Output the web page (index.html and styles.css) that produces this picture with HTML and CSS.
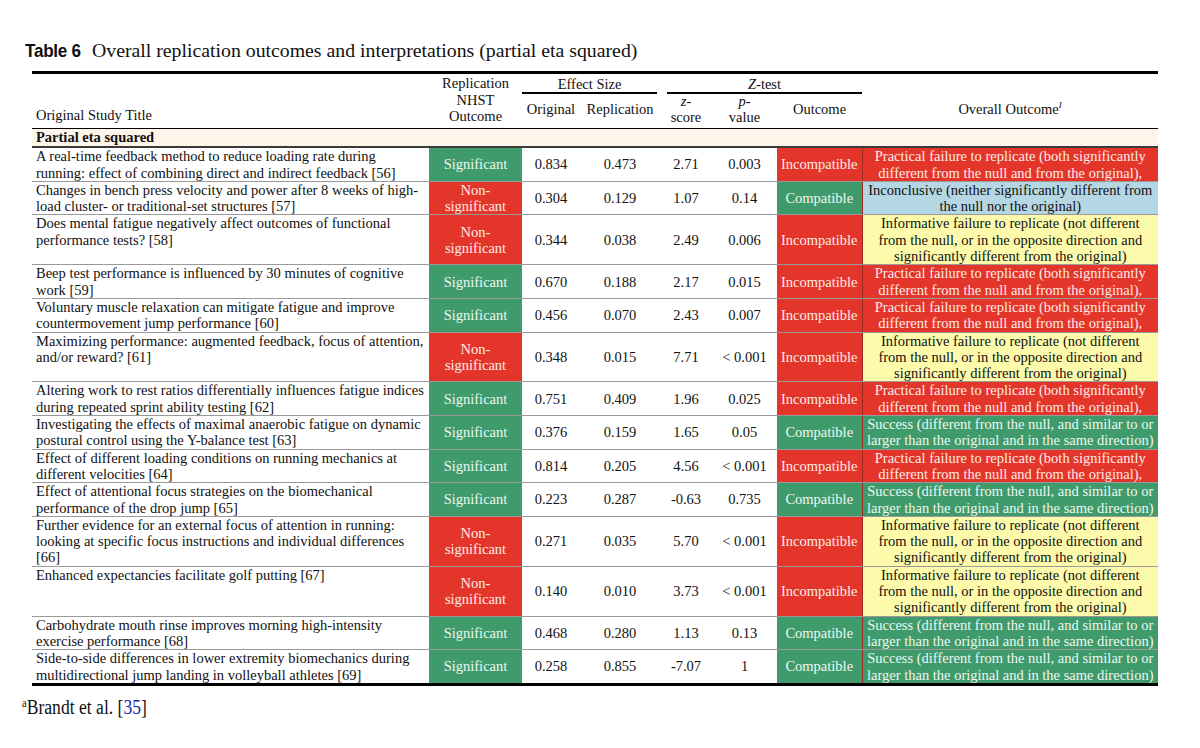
FILE: index.html
```html
<!DOCTYPE html>
<html>
<head>
<meta charset="utf-8">
<link rel="stylesheet" href="styles.css">
</head>
<body>
<div class="page">
  <div class="caption"><span class="cap-label">Table 6</span><span class="cap-text">Overall replication outcomes and interpretations (partial eta squared)</span></div>
  <table class="tbl">
    <colgroup>
      <col class="c-title"><col class="c-nhst"><col class="c-orig"><col class="c-rep"><col class="c-z"><col class="c-p"><col class="c-out"><col class="c-all">
    </colgroup>
    <thead>
      <tr class="h1">
        <th rowspan="2" class="h-title">Original Study Title</th>
        <th rowspan="2" class="h-nhst">Replication<br>NHST<br>Outcome</th>
        <th colspan="2" class="h-group"><div class="grp grp-es">Effect Size</div></th>
        <th colspan="3" class="h-group"><div class="grp grp-z"><i>Z</i>-test</div></th>
        <th></th>
      </tr>
      <tr class="h2">
        <th>Original</th>
        <th>Replication</th>
        <th><i>z</i>-<br>score</th>
        <th><i>p</i>-<br>value</th>
        <th>Outcome</th>
        <th>Overall Outcome<sup class="sup-i">I</sup></th>
      </tr>
    </thead>
    <tbody>
      <tr class="section"><td colspan="8">Partial eta squared</td></tr>
      <tr>
        <td class="t">A real-time feedback method to reduce loading rate during<br>running: effect of combining direct and indirect feedback [56]</td>
        <td class="sig">Significant</td><td>0.834</td><td>0.473</td><td>2.71</td><td>0.003</td>
        <td class="bad">Incompatible</td>
        <td class="ov bad">Practical failure to replicate (both significantly<br>different from the null and from the original),</td>
      </tr>
      <tr>
        <td class="t">Changes in bench press velocity and power after 8 weeks of high-<br>load cluster- or traditional-set structures [57]</td>
        <td class="bad">Non-<br>significant</td><td>0.304</td><td>0.129</td><td>1.07</td><td>0.14</td>
        <td class="sig">Compatible</td>
        <td class="ov blue">Inconclusive (neither significantly different from<br>the null nor the original)</td>
      </tr>
      <tr>
        <td class="t">Does mental fatigue negatively affect outcomes of functional<br>performance tests? [58]</td>
        <td class="bad">Non-<br>significant</td><td>0.344</td><td>0.038</td><td>2.49</td><td>0.006</td>
        <td class="bad">Incompatible</td>
        <td class="ov yel">Informative failure to replicate (not different<br>from the null, or in the opposite direction and<br>significantly different from the original)</td>
      </tr>
      <tr>
        <td class="t">Beep test performance is influenced by 30 minutes of cognitive<br>work [59]</td>
        <td class="sig">Significant</td><td>0.670</td><td>0.188</td><td>2.17</td><td>0.015</td>
        <td class="bad">Incompatible</td>
        <td class="ov bad">Practical failure to replicate (both significantly<br>different from the null and from the original),</td>
      </tr>
      <tr>
        <td class="t">Voluntary muscle relaxation can mitigate fatigue and improve<br>countermovement jump performance [60]</td>
        <td class="sig">Significant</td><td>0.456</td><td>0.070</td><td>2.43</td><td>0.007</td>
        <td class="bad">Incompatible</td>
        <td class="ov bad">Practical failure to replicate (both significantly<br>different from the null and from the original),</td>
      </tr>
      <tr>
        <td class="t">Maximizing performance: augmented feedback, focus of attention,<br>and/or reward? [61]</td>
        <td class="bad">Non-<br>significant</td><td>0.348</td><td>0.015</td><td>7.71</td><td>&lt; 0.001</td>
        <td class="bad">Incompatible</td>
        <td class="ov yel">Informative failure to replicate (not different<br>from the null, or in the opposite direction and<br>significantly different from the original)</td>
      </tr>
      <tr>
        <td class="t">Altering work to rest ratios differentially influences fatigue indices<br>during repeated sprint ability testing [62]</td>
        <td class="sig">Significant</td><td>0.751</td><td>0.409</td><td>1.96</td><td>0.025</td>
        <td class="bad">Incompatible</td>
        <td class="ov bad">Practical failure to replicate (both significantly<br>different from the null and from the original),</td>
      </tr>
      <tr>
        <td class="t">Investigating the effects of maximal anaerobic fatigue on dynamic<br>postural control using the Y-balance test [63]</td>
        <td class="sig">Significant</td><td>0.376</td><td>0.159</td><td>1.65</td><td>0.05</td>
        <td class="sig">Compatible</td>
        <td class="ov sig">Success (different from the null, and similar to or<br>larger than the original and in the same direction)</td>
      </tr>
      <tr>
        <td class="t">Effect of different loading conditions on running mechanics at<br>different velocities [64]</td>
        <td class="sig">Significant</td><td>0.814</td><td>0.205</td><td>4.56</td><td>&lt; 0.001</td>
        <td class="bad">Incompatible</td>
        <td class="ov bad">Practical failure to replicate (both significantly<br>different from the null and from the original),</td>
      </tr>
      <tr>
        <td class="t">Effect of attentional focus strategies on the biomechanical<br>performance of the drop jump [65]</td>
        <td class="sig">Significant</td><td>0.223</td><td>0.287</td><td>-0.63</td><td>0.735</td>
        <td class="sig">Compatible</td>
        <td class="ov sig">Success (different from the null, and similar to or<br>larger than the original and in the same direction)</td>
      </tr>
      <tr>
        <td class="t">Further evidence for an external focus of attention in running:<br>looking at specific focus instructions and individual differences<br>[66]</td>
        <td class="bad">Non-<br>significant</td><td>0.271</td><td>0.035</td><td>5.70</td><td>&lt; 0.001</td>
        <td class="bad">Incompatible</td>
        <td class="ov yel">Informative failure to replicate (not different<br>from the null, or in the opposite direction and<br>significantly different from the original)</td>
      </tr>
      <tr>
        <td class="t">Enhanced expectancies facilitate golf putting [67]</td>
        <td class="bad">Non-<br>significant</td><td>0.140</td><td>0.010</td><td>3.73</td><td>&lt; 0.001</td>
        <td class="bad">Incompatible</td>
        <td class="ov yel">Informative failure to replicate (not different<br>from the null, or in the opposite direction and<br>significantly different from the original)</td>
      </tr>
      <tr>
        <td class="t">Carbohydrate mouth rinse improves morning high-intensity<br>exercise performance [68]</td>
        <td class="sig">Significant</td><td>0.468</td><td>0.280</td><td>1.13</td><td>0.13</td>
        <td class="sig">Compatible</td>
        <td class="ov sig">Success (different from the null, and similar to or<br>larger than the original and in the same direction)</td>
      </tr>
      <tr class="last">
        <td class="t">Side-to-side differences in lower extremity biomechanics during<br>multidirectional jump landing in volleyball athletes [69]</td>
        <td class="sig">Significant</td><td>0.258</td><td>0.855</td><td>-7.07</td><td>1</td>
        <td class="sig">Compatible</td>
        <td class="ov sig">Success (different from the null, and similar to or<br>larger than the original and in the same direction)</td>
      </tr>
    </tbody>
  </table>
  <div class="foot"><span class="foot-in"><sup class="sup-a">a</sup>Brandt et al. [<span class="ref">35</span>]</span></div>
</div>
</body>
</html>
```

FILE: styles.css
```css
html, body {
  margin: 0;
  padding: 0;
  background: #ffffff;
}
.page {
  padding-top: 38px;
  font-family: "Liberation Serif", "Times New Roman", serif;
  color: #111;
}
.caption {
  margin-left: 25px;
  height: 24px;
  line-height: 24px;
  white-space: nowrap;
}
.cap-label {
  display: inline-block;
  font-family: "Liberation Sans Narrow", "Liberation Sans", Arial, sans-serif;
  font-weight: bold;
  font-size: 19px;
  letter-spacing: -0.3px;
  transform: scaleX(0.9);
  transform-origin: left center;
  margin-right: 5px;
}
.cap-text {
  font-size: 19.8px;
}
.tbl {
  margin-top: 9px;
  margin-left: 32px;
  width: 1126px;
  border-collapse: collapse;
  table-layout: fixed;
  font-size: 14.5px;
  line-height: 16.3px;
}
.c-title { width: 397px; }
.c-nhst { width: 93px; }
.c-orig { width: 58px; }
.c-rep { width: 80px; }
.c-z { width: 52px; }
.c-p { width: 65px; }
.c-out { width: 85px; }
.c-all { width: 296px; }

thead tr.h1 th {
  border-top: 3px solid #000;
}
thead th {
  font-weight: normal;
  padding: 0;
  text-align: center;
  vertical-align: middle;
  white-space: nowrap;
}
thead tr.h1 { height: 20px; }
thead tr.h2 { height: 34px; }
thead tr.h2 th {
  line-height: 15.5px;
  padding-bottom: 3px;
}
thead tr.h2 th,
thead th.h-title,
thead th.h-nhst {
  border-bottom: 1.5px solid #000;
}
th.h-title {
  text-align: left;
  vertical-align: bottom;
  padding: 0 0 5px 4px;
}
th.h-nhst {
  padding-bottom: 3px;
}
th.h-group {
  vertical-align: top;
  padding-top: 2px;
}
.grp {
  border-bottom: 2px solid #000;
  padding-bottom: 0;
}
.grp-es { margin-right: 3px; }
.grp-z { margin-left: 7px; }
.sup-i {
  font-size: 9px;
  font-style: italic;
  vertical-align: 6px;
  line-height: 0;
}

tr.section td {
  background: #fdf4ea;
  font-weight: bold;
  padding: 0 0 0 4px;
  height: 17px;
  line-height: 17px;
  border-bottom: 2.5px solid #3a3a3a;
  text-align: left;
}
tbody td {
  padding: 0;
  text-align: center;
  vertical-align: middle;
  border-bottom: 1px solid #9a9a9a;
  white-space: nowrap;
}
tbody tr.last td {
  border-bottom: 3px solid #000;
}
td.t {
  text-align: left;
  vertical-align: top;
  padding-left: 4px;
}
td.sig {
  background: #3f9b6c;
  color: #eef7f1;
}
td.bad {
  background: #e4352b;
  color: #fdebe7;
}
td.blue {
  background: #b5d6e3;
  color: #111;
}
td.yel {
  background: #fdfbab;
  color: #111;
}
td.ov {
  border-left: 1px solid #a02a22;
}
.foot {
  margin-top: 10px;
  margin-left: 22px;
  font-size: 20px;
  line-height: 22px;
}
.foot-in {
  display: inline-block;
  transform: scaleX(0.88);
  transform-origin: left center;
}
.sup-a {
  font-size: 12px;
  vertical-align: 7px;
  line-height: 0;
}
.ref {
  color: #1a22a8;
}
```
